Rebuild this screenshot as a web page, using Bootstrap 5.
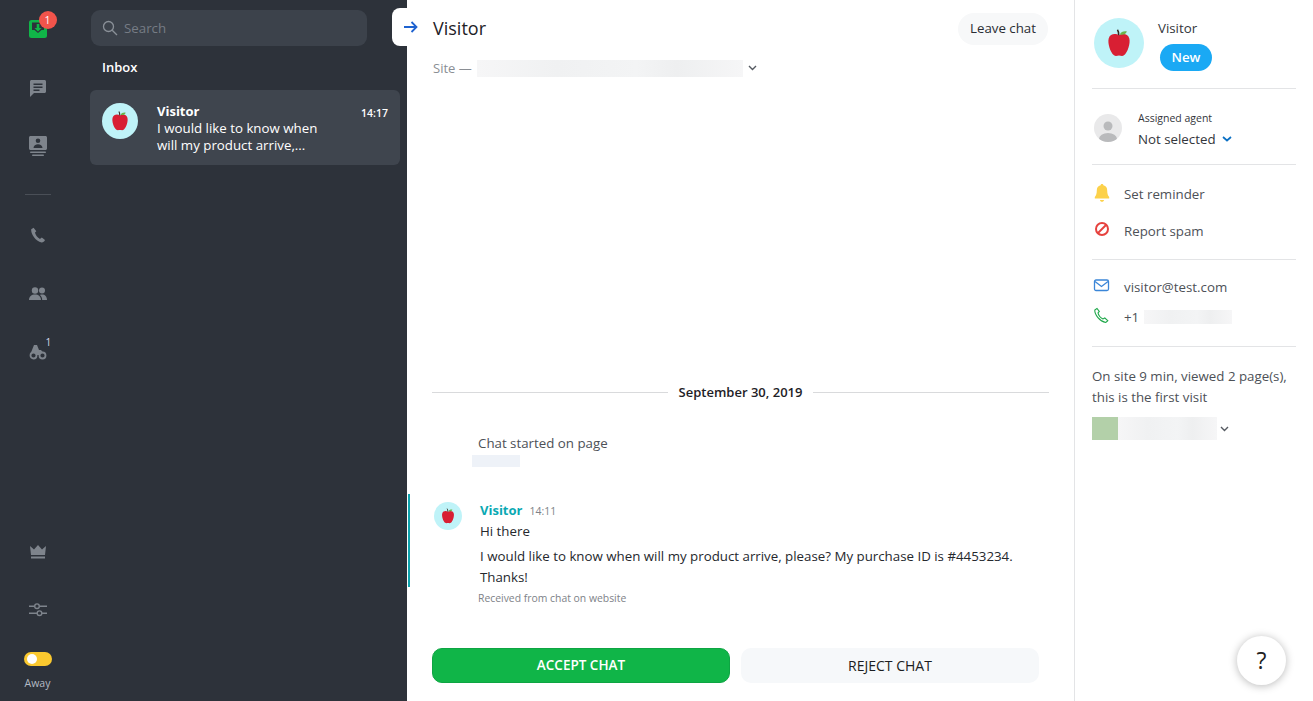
<!DOCTYPE html>
<html>

<head>
  <meta charset="utf-8">
  <meta name="viewport" content="width=device-width">
  <title>Inbox</title>
  <link href="https://cdn.jsdelivr.net/npm/bootstrap@5.3.3/dist/css/bootstrap.min.css" rel="stylesheet" />
  <style>
    html, body { height: 100%; overflow: hidden; }
    body { font-family: "Open Sans", "Noto Sans", sans-serif; font-size: 13.3px; color: #2a2d33; background: #fff; }
    .app-shell { height: 701px; }

    .rail { width: 78px; background: #2d323a; padding: 10px 3px 0 0; }
    .rail-item { width: 40px; height: 38px; margin-bottom: 20.5px; position: relative; }
    .rail-item svg { fill: #7e848c; }
    .rail-rule { width: 26px; height: 1px; background: #4a4f57; margin: 8.5px 0 21px; }
    .rail-badge { position: absolute; top: 1px; left: 21px; width: 18px; height: 18px; border-radius: 50%; background: #f2544b; color: #fff; font-size: 10.5px; line-height: 18px; text-align: center; }
    .rail-count { position: absolute; top: 3px; left: 28px; color: #d5daea; font-size: 10px; line-height: 12px; }
    .slider-item { margin-bottom: 23px; }
    .away-switch { width: 28px; height: 14px; border-radius: 7px; background: #fbc92f; position: relative; }
    .away-switch::before { content: ""; position: absolute; left: 3px; top: 2px; width: 10px; height: 10px; border-radius: 50%; background: #fff; }
    .away-label { font-size: 10.5px; color: #b4bac4; margin-top: 10px; margin-bottom: 11px; line-height: 14px; }

    .inbox-col { width: 329px; background: #2d323a; padding: 10px 7px 0 12px; }
    .search-box { width: 276px; height: 36px; margin-left: 1px; background: #3c424b; border-radius: 9px; padding-left: 11px; gap: 6px; color: #767c85; font-size: 13.3px; }
    .search-box span { margin-top: 2px; }
    .inbox-title { color: #fff; font-size: 13px; font-weight: 600; margin: 12px 0 14px 12px; line-height: 18px; }
    .convo-card { height: 75px; background: #3f454e; border-radius: 6px; padding: 13px 12px; color: #fff; }
    .convo-body { margin-left: 19px; width: 180px; font-size: 13.3px; line-height: 16.5px; }
    .convo-name { font-weight: 700; font-size: 13px; line-height: 17px; }
    .convo-time { font-size: 10.5px; font-weight: 600; margin-top: 3px; }

    .apple-avatar { border-radius: 50%; background: #bff3f8; flex: none; }
    .av-36 { width: 36px; height: 36px; }
    .av-28 { width: 28px; height: 28px; }
    .av-50 { width: 50px; height: 50px; margin-left: 2px; }

    .collapse-tab { position: absolute; left: -15px; top: 8px; width: 15px; height: 38px; background: #fff; border-radius: 8px 0 0 8px; }
    .main-col { position: relative; padding: 0 25px 18px; border-right: 1px solid #e3e4e6; width: 668px; }
    .chat-head { padding-top: 13px; height: 45px; }
    .chat-arrow { position: absolute; left: -3px; top: 20px; }
    .chat-name { font-size: 18px; line-height: 30px; color: #1e2126; margin-left: 1px; }
    .leave-btn { background: #f7f8f9; border: 0; border-radius: 16px; height: 32px; width: 90px; padding: 0; font-size: 13.3px; color: #2a2d33; margin: 0 1px; }
    .site-line { color: #8a8e94; font-size: 13px; line-height: 18px; margin: 14px 0 0 1px; }
    .blur-bar { background: linear-gradient(90deg, #f6f6f7 0%, #f0f1f2 30%, #f3f4f5 60%, #eeeff0 75%, #f6f6f7 100%); }
    .site-bar { width: 266px; height: 17px; margin-left: 5px; }
    .chev { fill: none; stroke: #555a61; stroke-width: 1.4; margin-left: 5px; }
    .date-rule { height: 1px; background: #d9dadc; flex: 1; }
    .date-text { font-weight: 600; font-size: 13px; padding: 0 11px; color: #1e2126; line-height: 18px; }
    .started-text { color: #4d5157; font-size: 13.3px; line-height: 18px; margin: 33px 0 3px 46px; }
    .started-bar { width: 48px; height: 12px; margin-left: 40px; background: #eef2f8; }
    .msg-block { border-left: 2px solid #0fa3ad; margin: 27px 0 0 -24px; padding: 8px 0 0 24px; height: 93px; }
    .msg-text { margin: -1px 0 0 18px; color: #25282d; font-size: 13.3px; }
    .msg-name { color: #0aa9b3; font-weight: 700; font-size: 13px; line-height: 17px; }
    .msg-time { color: #7e8288; font-size: 10.5px; margin-left: 7px; }
    .msg-line { line-height: 21px; }
    .received-note { color: #7e8288; font-size: 10.4px; margin: 1px 0 0 46px; line-height: 21px; }
    .accept-btn, .reject-btn { width: 298px; height: 35px; padding: 0; border-radius: 10px; font-size: 13.5px; text-transform: uppercase; }
    .accept-btn { background: #10b548; border: 1px solid #0ea543; color: #fff; font-weight: 600; }
    .reject-btn { background: #f6f8fa; border: 0; color: #1b1d21; font-size: 14px; }
    .btn-row { gap: 11px; margin-top: 39px; }

    .side-col { flex: 1; padding: 0 17px; position: relative; }
    .side-head { padding-top: 18px; height: 89px; border-bottom: 1px solid #e3e4e6; }
    .side-name { font-size: 13.3px; line-height: 20px; color: #33363b; margin-bottom: 6px; }
    .new-pill { display: inline-block; background: #1aa9f4; color: #fff; font-weight: 600; font-size: 13.3px; border-radius: 14px; width: 52px; height: 27px; line-height: 26px; text-align: center; margin-left: 2px; }
    .side-name-col { margin-left: -2px; }
    .side-agent { height: 76px; border-bottom: 1px solid #e3e4e6; padding-top: 24px; }
    .agent-icon { width: 28px; height: 28px; border-radius: 50%; background: #e9e9ea; overflow: hidden; margin: 1px 16px 0 2px; flex: none; }
    .agent-small { font-size: 10.5px; line-height: 14px; color: #33363b; margin-top: -2px; }
    .agent-value { font-size: 13.3px; line-height: 22px; color: #33363b; margin-top: 3px; gap: 6px; }
    .side-actions { height: 95px; border-bottom: 1px solid #e3e4e6; padding-top: 19px; }
    .side-row { height: 37px; color: #4d5157; font-size: 13.3px; line-height: 20px; }
    .side-row svg { width: 18px; height: 18px; margin: 0 13px 0 1px; flex: none; }
    .side-contact { height: 87px; border-bottom: 1px solid #e3e4e6; padding-top: 17px; }
    .side-contact .side-row { height: 30px; }
    .phone-bar { width: 88px; height: 14px; margin: 3px 0 0 5px; }
    .side-visit { padding-top: 19px; color: #4d5157; font-size: 13.3px; line-height: 20.5px; }
    .visit-row { margin-top: 10px; }
    .visit-thumb { width: 26px; height: 23px; background: #b3d0a9; }
    .visit-bar { width: 99px; height: 23px; }
    .visit-row .chev { margin-left: 3px; }
    .help-btn { position: absolute; left: 162px; top: 636px; width: 49px; height: 49px; padding: 0; border-radius: 50%; border: 0; background: #fff; box-shadow: 0 1px 8px rgba(0, 0, 0, .28); font-size: 23px; color: #222; line-height: 49px; }
  </style>
</head>

<body>

  <svg width="0" height="0" class="position-absolute">
    <symbol id="apple" viewBox="0 0 24 24">
      <path d="M12 7.500c1.700-1.200 5.600-1.500 6.600 2 .8 3-1 8.800-3.400 10.800-1 .8-2.200.2-3.200.2s-2.200.6-3.200-.2C6.400 18.300 4.600 12.500 5.400 9.500c1-3.500 4.900-3.200 6.600-2z" fill="#d81f33" />
      <path d="M12.500 7c.8-1.700 2.300-2.300 4.500-2-.4 1.700-2 2.500-4.500 2z" fill="#6bb44a" />
      <path d="M11.800 7.500c0-1.500-.2-2.700-.8-3.500" stroke="#3a2a20" stroke-width="1" fill="none" />
    </symbol>
  </svg>

  <div class="app-shell d-flex">

    <nav class="rail d-flex flex-column align-items-center">
      <div class="rail-item d-flex align-items-center justify-content-center">
        <svg width="18" height="18" viewBox="0 0 18 18"><rect width="18" height="18" rx="2.500" style="fill:#10b548" /><path d="M3 2.500h12V10h-2.500L9 13 5.500 10H3z" style="fill:#2d323a" /><path d="M7.700 4h2.600v4h2.200L9 11.500 5.500 8h2.200z" style="fill:#10b548" /></svg>
        <span class="rail-badge">1</span>
      </div>
      <div class="rail-item d-flex align-items-center justify-content-center">
        <svg width="18" height="18" viewBox="0 0 18 18"><path d="M2.500 1h13c.8 0 1.500.7 1.500 1.500v10c0 .8-.7 1.500-1.500 1.500H5l-4 4V2.500C1 1.700 1.700 1 2.500 1zM4.500 4.500V6h9V4.500zm0 3V9h9V7.500zm0 3V12h6v-1.500z" fill-rule="evenodd" /></svg>
      </div>
      <div class="rail-item d-flex align-items-center justify-content-center">
        <svg width="20" height="22" viewBox="0 0 20 22"><path d="M2.500 1h15c.8 0 1.500.7 1.500 1.500v11c0 .8-.7 1.500-1.500 1.500h-15C1.700 15 1 14.300 1 13.500v-11C1 1.700 1.700 1 2.500 1zM10 3.500a2.300 2.300 0 1 0 0 4.600 2.300 2.300 0 0 0 0-4.600zM5.500 13h9c0-2.500-2.200-3.800-4.500-3.800S5.500 10.500 5.500 13z" fill-rule="evenodd" /><rect x="2" y="16.500" width="16" height="1.500" rx=".7" /><rect x="4" y="19.500" width="12" height="1.500" rx=".7" /></svg>
      </div>
      <div class="rail-rule"></div>
      <div class="rail-item d-flex align-items-center justify-content-center">
        <svg width="16" height="16" viewBox="0 0 16 16"><path d="M3.600.8 1.200 2.200C.6 6.500 5.500 14.400 11.600 15.400c1 .2 3-1 3.400-2.400l-3.200-2.400-1.900 1.300C7.800 11 5.300 7.800 5 5.600l1.300-1.300z" /></svg>
      </div>
      <div class="rail-item d-flex align-items-center justify-content-center">
        <svg width="18" height="14" viewBox="0 0 18 14"><circle cx="6" cy="3.500" r="3.200" /><circle cx="13" cy="3.500" r="3" /><path d="M0 13c0-3.500 2.500-5.500 6-5.500s6 2 6 5.500zM13.200 13c0-2.200-.8-4-2.300-5.100 .7-.3 1.400-.4 2.100-.4 3 0 5 2 5 5.500z" /></svg>
      </div>
      <div class="rail-item d-flex align-items-center justify-content-center">
        <svg width="18" height="16" viewBox="0 0 18 16"><path d="M1 11 5 1h3l2 5h2l4 5z" /><circle cx="4.500" cy="11.500" r="3" style="fill:#2d323a;stroke:#7e848c;stroke-width:1.800" /><circle cx="13.500" cy="11.500" r="3" style="fill:#2d323a;stroke:#7e848c;stroke-width:1.800" /></svg>
        <span class="rail-count">1</span>
      </div>
      <div class="flex-grow-1"></div>
      <div class="rail-item d-flex align-items-center justify-content-center">
        <svg width="16" height="14" viewBox="0 0 16 14"><path d="M0 1l4 3.500L8 0l4 4.500L16 1l-1 9H1z" /><rect x="1" y="11.500" width="14" height="2" /></svg>
      </div>
      <div class="rail-item slider-item d-flex align-items-center justify-content-center">
        <svg width="18" height="16" viewBox="0 0 18 16"><path d="M0 4.200h5.500M10.500 4.200H18M0 11.200h8M13 11.200h5" style="stroke:#7e848c;stroke-width:1.400;fill:none" /><circle cx="8" cy="4.200" r="2.300" style="stroke:#7e848c;stroke-width:1.400;fill:none" /><circle cx="10.500" cy="11.200" r="2.300" style="stroke:#7e848c;stroke-width:1.400;fill:none" /></svg>
      </div>
      <div class="away-switch"></div>
      <div class="away-label">Away</div>
    </nav>

    <section class="inbox-col">
      <div class="search-box d-flex align-items-center">
        <svg width="16" height="16" viewBox="0 0 16 16" fill="none" stroke="#8a9098" stroke-width="1.300"><circle cx="6.500" cy="6.500" r="5" /><path d="M10.200 10.200 15 15" /></svg>
        <span>Search</span>
      </div>
      <div class="inbox-title">Inbox</div>
      <div class="convo-card d-flex">
        <svg class="apple-avatar av-36" viewBox="0 0 36 36"><use href="#apple" x="4.500" y="4" width="27" height="27" /></svg>
        <div class="convo-body">
          <div class="convo-name">Visitor</div>
          <div>I would like to know when will my product arrive,...</div>
        </div>
        <div class="convo-time ms-auto">14:17</div>
      </div>
    </section>

    <main class="main-col d-flex flex-column">
      <div class="collapse-tab"></div>
      <svg class="chat-arrow" width="14" height="14" viewBox="0 0 14 14" fill="none" stroke="#1f63d0" stroke-width="1.800"><path d="M0 7h12M7.500 2l5 5-5 5" /></svg>
      <div class="chat-head d-flex justify-content-between">
        <div class="chat-name">Visitor</div>
        <button class="leave-btn" type="button">Leave chat</button>
      </div>
      <div class="site-line d-flex align-items-center">
        <span>Site —</span>
        <div class="blur-bar site-bar"></div>
        <svg class="chev" width="9" height="6" viewBox="0 0 9 6"><path d="M1 1l3.500 3.500L8 1" /></svg>
      </div>
      <div class="flex-grow-1"></div>
      <div class="d-flex align-items-center">
        <div class="date-rule"></div>
        <div class="date-text">September 30, 2019</div>
        <div class="date-rule"></div>
      </div>
      <div class="started-text">Chat started on page</div>
      <div class="started-bar"></div>
      <div class="msg-block d-flex">
        <svg class="apple-avatar av-28" viewBox="0 0 36 36"><use href="#apple" x="4.500" y="4" width="27" height="27" /></svg>
        <div class="msg-text">
          <div><span class="msg-name">Visitor</span><span class="msg-time">14:11</span></div>
          <div class="msg-line">Hi there</div>
          <div class="msg-line mt-1">I would like to know when will my product arrive, please? My purchase ID is #4453234. Thanks!</div>
        </div>
      </div>
      <div class="received-note">Received from chat on website</div>
      <div class="btn-row d-flex">
        <button class="btn accept-btn" type="button">Accept chat</button>
        <button class="btn reject-btn" type="button">Reject chat</button>
      </div>
    </main>

    <aside class="side-col">
      <div class="side-head d-flex">
        <svg class="apple-avatar av-50 me-3" viewBox="0 0 36 36"><use href="#apple" x="4.500" y="4" width="27" height="27" /></svg>
        <div class="side-name-col">
          <div class="side-name">Visitor</div>
          <span class="new-pill">New</span>
        </div>
      </div>
      <div class="side-agent d-flex">
        <div class="agent-icon">
          <svg width="28" height="28" viewBox="0 0 28 28"><circle cx="14" cy="12" r="4.500" fill="#b9babc" /><ellipse cx="14" cy="25" rx="9" ry="6" fill="#b9babc" /></svg>
        </div>
        <div>
          <div class="agent-small">Assigned agent</div>
          <div class="agent-value d-flex align-items-center">Not selected
            <svg width="10" height="6" viewBox="0 0 10 6" fill="none" stroke="#0b70c4" stroke-width="1.700"><path d="M1 1l4 3.500L9 1" /></svg>
          </div>
        </div>
      </div>
      <div class="side-actions">
        <div class="side-row d-flex">
          <svg viewBox="0 0 18 18"><path d="M9 0c.8 0 1.300.5 1.400 1.300 2.500.6 3.800 2.500 3.800 5.200 0 3 .6 5 2 6.500v1.500H1.800V13c1.400-1.500 2-3.500 2-6.500 0-2.700 1.300-4.600 3.800-5.200C7.700.5 8.200 0 9 0zM7 16h4c0 1-.9 1.800-2 1.800S7 17 7 16z" fill="#fcd14a" /></svg>
          <span>Set reminder</span>
        </div>
        <div class="side-row d-flex">
          <svg viewBox="0 0 18 18" fill="none" stroke="#e6423e" stroke-width="2"><circle cx="9" cy="8" r="6" /><path d="M5 12l8-8" /></svg>
          <span>Report spam</span>
        </div>
      </div>
      <div class="side-contact">
        <div class="side-row d-flex">
          <svg viewBox="0 0 18 18" fill="none" stroke="#3b86d8" stroke-width="1.300"><rect x="1.500" y="3" width="14" height="10.500" rx="1.500" /><path d="M2 4.500l6.500 5 6.500-5" /></svg>
          <span>visitor@test.com</span>
        </div>
        <div class="side-row d-flex">
          <svg viewBox="0 0 18 18" fill="none" stroke="#1fa84a" stroke-width="1.100"><path d="M4 1.500 1.800 3c-.3 4.500 5 11.500 11 12.500l2-1.800-3-2.700-1.800 1C8 11 5.500 8 5 5.800l1.300-1.300z" /></svg>
          <span>+1</span>
          <div class="blur-bar phone-bar"></div>
        </div>
      </div>
      <div class="side-visit">
        <div>On site 9 min, viewed 2 page(s),<br>this is the first visit</div>
        <div class="visit-row d-flex align-items-center">
          <div class="visit-thumb"></div>
          <div class="blur-bar visit-bar"></div>
          <svg class="chev" width="9" height="6" viewBox="0 0 9 6"><path d="M1 1l3.500 3.500L8 1" /></svg>
        </div>
      </div>
      <button class="help-btn" type="button">?</button>
    </aside>

  </div>

</body>

</html>
